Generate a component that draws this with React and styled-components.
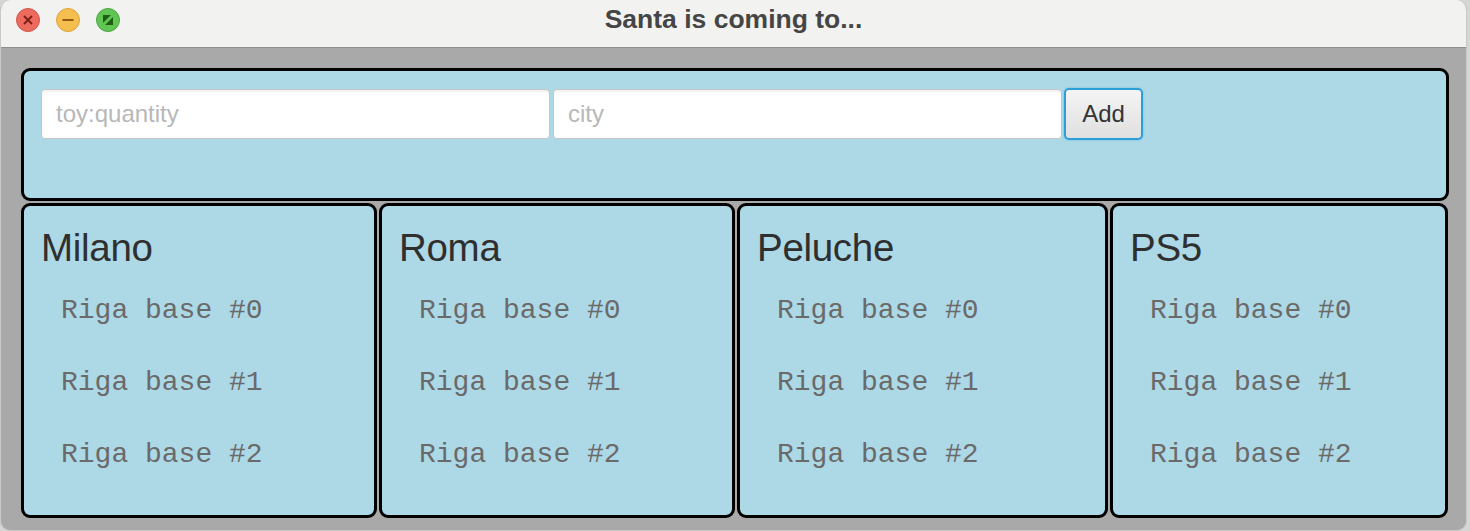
import React from "react";
import styled, { createGlobalStyle } from "styled-components";

const columns = [
  { title: "Milano", width: 356 },
  { title: "Roma", width: 356 },
  { title: "Peluche", width: 371 },
  { title: "PS5", width: 338 },
];

const rows = ["Riga base #0", "Riga base #1", "Riga base #2"];

const TrafficLights = () => (
  <Lights>
    <svg width="24" height="24" viewBox="0 0 24 24">
      <circle cx="12" cy="12" r="11.5" fill="#ed6a5e" stroke="#d1574c" />
      <path d="M8 8 L16 16 M16 8 L8 16" stroke="#7e1d13" strokeWidth="1.8" />
    </svg>
    <svg width="24" height="24" viewBox="0 0 24 24">
      <circle cx="12" cy="12" r="11.5" fill="#f5bf4f" stroke="#d9a33c" />
      <path d="M6.5 12 H17.5" stroke="#985712" strokeWidth="2.2" />
    </svg>
    <svg width="24" height="24" viewBox="0 0 24 24">
      <circle cx="12" cy="12" r="11.5" fill="#61c554" stroke="#4ea443" />
      <path d="M7 7 H15 L7 15 Z M17 17 H9 L17 9 Z" fill="#1f5e14" />
    </svg>
  </Lights>
);

const App = () => {
  return (
    <>
      <GlobalStyle />
      <Window>
        <TitleBar>
          <TrafficLights />
          <Title>Santa is coming to...</Title>
        </TitleBar>
        <Content>
          <FormPanel>
            <Input placeholder="toy:quantity" />
            <Input placeholder="city" />
            <AddButton>Add</AddButton>
          </FormPanel>
          <Columns>
            {columns.map((col) => (
              <Column key={col.title} $width={col.width}>
                <Heading>{col.title}</Heading>
                {rows.map((r) => (
                  <Row key={r}>{r}</Row>
                ))}
              </Column>
            ))}
          </Columns>
        </Content>
      </Window>
    </>
  );
};

export default App;

const GlobalStyle = createGlobalStyle`
  html, body {
    margin: 0;
    padding: 0;
    background: #d6d6d6;
    font-family: "Liberation Sans", Arial, sans-serif;
  }
`;

const Window = styled.div`
  width: 1467px;
  height: 531px;
  box-sizing: border-box;
  border: 1px solid #c9c9c9;
  border-top: none;
  border-radius: 10px;
  overflow: hidden;
  background: #a9a9a9;
  display: flex;
  flex-direction: column;
`;

const TitleBar = styled.div`
  height: 47px;
  flex-shrink: 0;
  background: #f2f2f1;
  border-bottom: 1px solid #8e8e8e;
  display: flex;
  align-items: center;
  position: relative;
  justify-content: center;
`;

const Lights = styled.div`
  position: absolute;
  left: 15px;
  top: 8px;
  display: flex;
  gap: 16px;
`;

const Title = styled.div`
  font-family: "Liberation Sans", Arial, sans-serif;
  font-weight: bold;
  font-size: 26.5px;
  color: #454545;
  margin-top: -8px;
`;

const Content = styled.div`
  padding: 20px 0 0 20px;
  display: flex;
  flex-direction: column;
  gap: 2px;
`;

const Panel = styled.div`
  box-sizing: border-box;
  background: #add8e6;
  border: 3px solid #000;
  border-radius: 9px;
`;

const FormPanel = styled(Panel)`
  width: 1428px;
  height: 133px;
  padding: 18px 17px;
  display: flex;
  align-items: flex-start;
  gap: 3px;
`;

const Input = styled.input`
  box-sizing: border-box;
  width: 509px;
  height: 50px;
  border: 1px solid #c6c6c6;
  border-radius: 4px;
  background: #fff;
  box-shadow: inset 0 2px 2px rgba(0, 0, 0, 0.06);
  padding: 0 14px;
  font-family: "Liberation Sans", Arial, sans-serif;
  font-size: 24px;
  color: #333;
  outline: none;

  &::placeholder {
    color: #b8b8b8;
  }
`;

const AddButton = styled.button`
  box-sizing: border-box;
  width: 79px;
  height: 52px;
  margin: -1px 0 0 -1px;
  border: 2px solid #2b9fd8;
  border-radius: 5px;
  background: linear-gradient(#f4f4f4, #e0e0e0);
  box-shadow: 0 0 2px rgba(43, 159, 216, 0.6);
  font-family: "Liberation Sans", Arial, sans-serif;
  font-size: 24px;
  color: #333;
  padding: 0;
`;

const Columns = styled.div`
  display: flex;
  gap: 2px;
`;

const Column = styled(Panel)`
  width: ${(p) => p.$width}px;
  height: 315px;
  padding: 20px 17px;
  display: flex;
  flex-direction: column;
`;

const Heading = styled.h2`
  margin: 0 0 4px 0;
  font-family: "Liberation Sans", Arial, sans-serif;
  font-weight: normal;
  font-size: 38.5px;
  line-height: 44px;
  color: #2f2f2f;
  letter-spacing: -0.3px;
`;

const Row = styled.div`
  height: 72px;
  display: flex;
  align-items: center;
  padding-left: 20px;
  font-family: "Liberation Mono", "Courier New", monospace;
  font-size: 28px;
  color: #6a6a6a;
`;
